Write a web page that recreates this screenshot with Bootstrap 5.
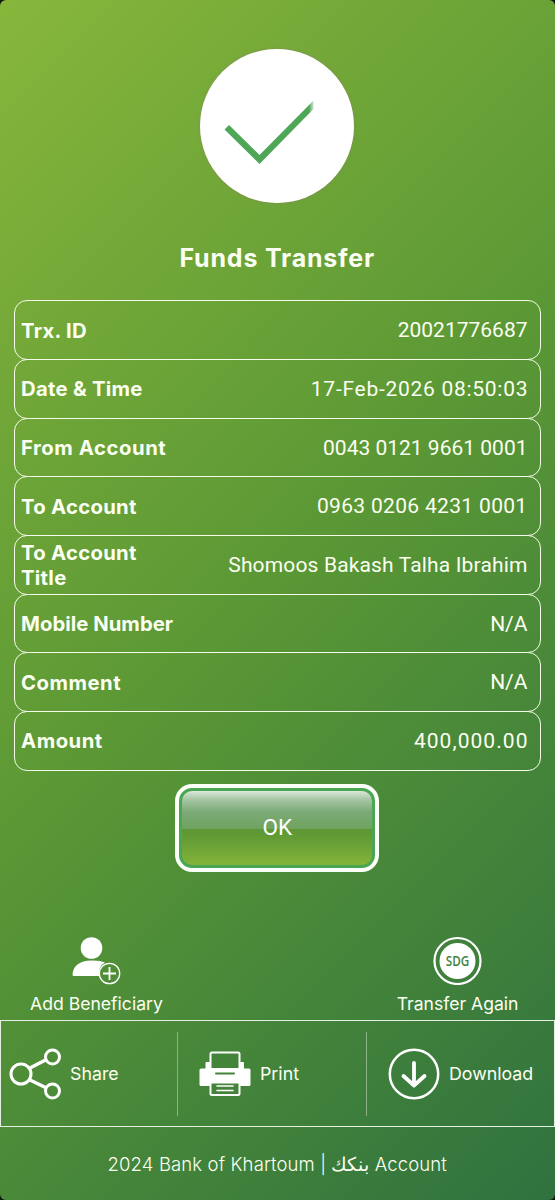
<!DOCTYPE html>
<html lang="en">
<head>
<meta charset="utf-8">
<meta name="viewport" content="width=device-width, initial-scale=1">
<title>Funds Transfer</title>
<link href="https://cdn.jsdelivr.net/npm/bootstrap@5.3.0/dist/css/bootstrap.min.css" rel="stylesheet">
<style>
  body { background: #0c1a0c; font-family: Roboto, "Noto Sans", "DejaVu Sans", sans-serif; color: #fbfff2; overflow: hidden; }
  .screen { width: 554.5px; height: 1200px; border-radius: 6px; background: linear-gradient(135deg, #87b63b 0%, #5b9835 48%, #2f723f 100%); }
  .status-disc { width: 154px; height: 154px; margin-top: 49px; box-shadow: 0 0 3px rgba(150,120,120,.6); }
  .page-title, .detail dt, .extra, .tool, .foot { font-family: Inter, Roboto, "DejaVu Sans", sans-serif; }
  .page-title { font-size: 25px; line-height: 30px; margin-top: 40px; letter-spacing: .8px; }
  .details { margin: 27.2px 14px 0; }
  .detail { height: 59.7px; border: 1px solid #f4fbe9; border-radius: 13px; padding: 0 12px 0 6px; font-size: 21px; line-height: 25px; }
  .detail + .detail { margin-top: -1px; }
  .detail dt { width: 160px; font-weight: 700; font-size: 20.3px; white-space: nowrap; letter-spacing: .28px; }
  .detail .l-from { letter-spacing: .55px; }
  .detail .l-mobile { letter-spacing: .03px; }
  .detail .l-wide { letter-spacing: .5px; }
  .detail dd { white-space: nowrap; padding-top: 1.2px; }
  .v-date { letter-spacing: .72px; margin-right: -.7px; }
  .v-to { letter-spacing: .32px; }
  .v-name { letter-spacing: .15px; }
  .v-amount { letter-spacing: 1.05px; margin-right: -1px; }
  .ok-ring { width: 204px; height: 88px; margin-top: 13px; padding: 4px; border-radius: 17px; background: #fbfff8; }
  .btn-ok { border: 3px solid #4ba653; border-radius: 13px; color: #fff; font-size: 22.5px; padding: 0;
    background: linear-gradient(#dbe8da 0, #a4c5a2 12%, #7daa77 28%, #6fa35f 51%, #5b9733 51.5%, #659d35 65%, #83b43a 100%); }
  .extras { height: 84px; margin-top: 64.1px; padding: 0 36px 0 30px; font-size: 17.6px; line-height: 22px; }
  .extra svg { display: block; margin-bottom: 8px; }
  .toolbar { height: 107.5px; border: 1.5px solid #e6f0e2; }
  .tool { font-size: 17.8px; }
  .tool span { padding-top: 1px; }
  .tool + .tool::before { content: ""; width: 1px; height: 84px; background: #8cb386; }
  .tool-a { width: 176px; } .tool-b { width: 189px; } .tool-c { width: 187px; }
  .tool-b svg, .tool-c svg { margin: 0 9px 0 21px; }
  .foot { font-size: 18.5px; font-weight: 300; line-height: 24px; margin-top: 24.3px; white-space: pre; letter-spacing: .13px; }
</style>
</head>
<body>
<main class="screen d-flex flex-column">
  <div class="status-disc bg-white rounded-circle align-self-center flex-shrink-0">
    <svg width="154" height="154" viewBox="0 0 154 154" aria-hidden="true">
      <defs><linearGradient id="tip" gradientUnits="userSpaceOnUse" x1="109" y1="0" x2="114" y2="0"><stop stop-color="#4ea657"/><stop offset="1" stop-color="#4ea657" stop-opacity=".2"/></linearGradient></defs>
      <path d="M24.500 80.500 29 76 59.500 106 113.500 51.500V60L59.500 115Z" fill="url(#tip)"/>
    </svg>
  </div>
  <h1 class="page-title fw-bold text-center mb-0">Funds Transfer</h1>

  <div class="details">
    <dl class="detail d-flex align-items-center justify-content-between mb-0"><dt>Trx. ID</dt><dd class="mb-0">20021776687</dd></dl>
    <dl class="detail d-flex align-items-center justify-content-between mb-0"><dt>Date &amp; Time</dt><dd class="v-date mb-0">17-Feb-2026 08:50:03</dd></dl>
    <dl class="detail d-flex align-items-center justify-content-between mb-0"><dt class="l-from">From Account</dt><dd class="mb-0">0043 0121 9661 0001</dd></dl>
    <dl class="detail d-flex align-items-center justify-content-between mb-0"><dt>To Account</dt><dd class="v-to mb-0">0963 0206 4231 0001</dd></dl>
    <dl class="detail d-flex align-items-center justify-content-between mb-0"><dt>To Account<br>Title</dt><dd class="v-name mb-0">Shomoos Bakash Talha Ibrahim</dd></dl>
    <dl class="detail d-flex align-items-center justify-content-between mb-0"><dt class="l-mobile">Mobile Number</dt><dd class="mb-0">N/A</dd></dl>
    <dl class="detail d-flex align-items-center justify-content-between mb-0"><dt class="l-wide">Comment</dt><dd class="mb-0">N/A</dd></dl>
    <dl class="detail d-flex align-items-center justify-content-between mb-0"><dt class="l-wide">Amount</dt><dd class="v-amount mb-0">400,000.00</dd></dl>
  </div>

  <div class="ok-ring align-self-center d-flex flex-shrink-0"><button type="button" class="btn btn-ok flex-fill">OK</button></div>

  <div class="extras d-flex justify-content-between">
    <div class="extra d-flex flex-column align-items-center">
      <svg width="50" height="49" viewBox="0 0 50 49" aria-hidden="true">
        <circle cx="20.500" cy="12" r="10.800" fill="#fff"/>
        <path d="M1.500 36V38.500Q1.500 40 3 40H28.500A11 11 0 0 1 34 26.500Q28 24 20 24.500Q3 25 1.500 38Z" fill="#fff"/>
        <circle cx="38.500" cy="37.500" r="10.200" fill="none" stroke="#fff" stroke-width="1.300"/>
        <path d="M38.500 31v13M32 37.500h13" stroke="#fff" stroke-width="1.800"/>
      </svg>
      <span>Add Beneficiary</span>
    </div>
    <div class="extra d-flex flex-column align-items-center">
      <svg width="49" height="49" viewBox="0 0 49 49" aria-hidden="true">
        <circle cx="24.500" cy="25" r="23" fill="none" stroke="#fff" stroke-width="2.200"/>
        <circle cx="24.500" cy="25" r="18" fill="#fff"/>
        <text x="24.500" y="29.800" text-anchor="middle" font-family="Open Sans, sans-serif" font-weight="600" font-size="13.500" textLength="23.500" lengthAdjust="spacingAndGlyphs" fill="#43803e">SDG</text>
      </svg>
      <span>Transfer Again</span>
    </div>
  </div>

  <div class="toolbar d-flex flex-shrink-0">
    <div class="tool tool-a d-flex align-items-center">
      <svg class="ms-2 me-2" width="53" height="53" viewBox="0 0 53 53" fill="none" stroke="#fff" aria-hidden="true">
        <path d="M21 21 36.500 13M21 33 36.500 40.500" stroke-width="3.600"/>
        <circle cx="12" cy="27" r="10" stroke-width="3"/><circle cx="43.500" cy="10" r="7" stroke-width="3"/><circle cx="43.500" cy="44" r="7" stroke-width="3"/>
      </svg>
      <span>Share</span>
    </div>
    <div class="tool tool-b d-flex align-items-center">
      <svg width="52" height="46" viewBox="0 0 52 46" aria-hidden="true">
        <path d="M2 17.500H6.500V12Q6.500 11 7.500 11H44Q45 11 45 12V17.500H50Q51.500 17.500 51.500 19V33.500Q51.500 35 50 35H2Q.5 35 .5 33.500V19Q.5 17.500 2 17.500Z" fill="#fff"/>
        <path d="M11.500 17V3Q11.500 1.500 13 1.500H39Q40.500 1.500 40.500 3V17M11.500 31.500V42.500Q11.500 44 13 44H39Q40.500 44 40.500 42.500V31.500Z" fill="#44843a" stroke="#fff" stroke-width="2"/>
        <path d="M17 22.500H35" stroke="#44843a" stroke-width="2" stroke-linecap="round"/>
        <path d="M18 35H34M18 39.500H34" stroke="#fff" stroke-width="1.600" stroke-linecap="round"/>
      </svg>
      <span>Print</span>
    </div>
    <div class="tool tool-c d-flex align-items-center">
      <svg width="52" height="52" viewBox="0 0 52 52" fill="none" stroke="#fff" aria-hidden="true">
        <circle cx="26" cy="26" r="24.200" stroke-width="2.500"/>
        <path d="M26 15V37.500M15.500 28 26 37.500 36.500 28" stroke-width="3.800" stroke-linecap="round" stroke-linejoin="round"/>
      </svg>
      <span>Download</span>
    </div>
  </div>
  <footer class="foot text-center">2024 Bank of Khartoum | بنكك Account</footer>
</main>
<script src="https://cdn.jsdelivr.net/npm/bootstrap@5.3.0/dist/js/bootstrap.bundle.min.js"></script>
</body>
</html>
